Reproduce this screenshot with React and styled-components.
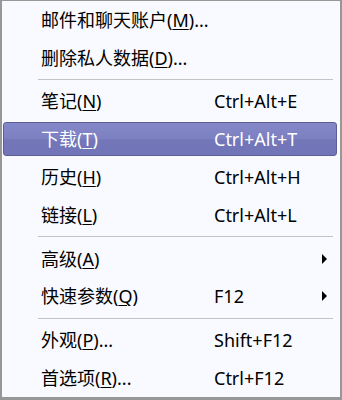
import React from 'react'
import styled, { createGlobalStyle } from 'styled-components'

const Global = createGlobalStyle`
  html, body { margin: 0; padding: 0; background: #f8faff; }
  body { font-family: "Noto Sans", "Noto Sans CJK SC", sans-serif; }
`

const items = [
  { label: '邮件和聊天账户', key: 'M', dots: true },
  { label: '删除私人数据', key: 'D', dots: true },
  'sep',
  { label: '笔记', key: 'N', shortcut: 'Ctrl+Alt+E' },
  { label: '下载', key: 'T', shortcut: 'Ctrl+Alt+T', active: true },
  { label: '历史', key: 'H', shortcut: 'Ctrl+Alt+H' },
  { label: '链接', key: 'L', shortcut: 'Ctrl+Alt+L' },
  'sep',
  { label: '高级', key: 'A', sub: true },
  { label: '快速参数', key: 'Q', shortcut: 'F12', sub: true },
  'sep',
  { label: '外观', key: 'P', shortcut: 'Shift+F12', dots: true },
  { label: '首选项', key: 'R', shortcut: 'Ctrl+F12', dots: true },
]

const Menu = styled.ul`
  margin: 0;
  padding: 0;
  list-style: none;
  width: 342px;
  height: 400px;
  box-sizing: border-box;
  background: #f8faff;
  border-style: solid;
  border-color: #979797;
  border-width: 1px 2px 3px 2px;
  display: flex;
  flex-direction: column;
`

const Item = styled.li`
  height: 37.8px;
  box-sizing: border-box;
  padding: 2px 3px 2px 1px;
  display: flex;
`

const Bar = styled.div`
  flex: 1;
  display: flex;
  align-items: center;
  box-sizing: border-box;
  padding-left: 37px;
  border: 1px solid ${p => (p.$active ? '#5b5e97' : 'transparent')};
  border-radius: 3px;
  background: ${p =>
    p.$active
      ? 'linear-gradient(#8488c8, #7c80c1 50%, #7376b9 52%, #7174b7)'
      : 'transparent'};
  color: ${p => (p.$active ? '#ffffff' : '#000000')};
  font-size: 18px;
  line-height: 1;
`

const Label = styled.span`
  width: 173px;
  flex: none;
  white-space: nowrap;
`

const Key = styled.span`
  text-decoration: underline;
  text-underline-offset: 2px;
`

const Shortcut = styled.span`
  flex: 1;
  white-space: nowrap;
`

const Arrow = styled.span`
  width: 0;
  height: 0;
  margin-right: 9px;
  border-left: 5px solid #000;
  border-top: 5px solid transparent;
  border-bottom: 5px solid transparent;
`

const Sep = styled.li`
  height: 6px;
  display: flex;
  align-items: center;
  &::after {
    content: '';
    flex: 1;
    height: 1px;
    margin: 0 7px 0 36px;
    background: #c3c3c3;
  }
`

export default function App() {
  return (
    <>
      <Global />
      <Menu>
        {items.map((it, i) =>
          it === 'sep' ? (
            <Sep key={i} />
          ) : (
            <Item key={i}>
              <Bar $active={it.active}>
                <Label>
                  {it.label}(<Key>{it.key}</Key>){it.dots ? '...' : ''}
                </Label>
                <Shortcut>{it.shortcut}</Shortcut>
                {it.sub && <Arrow />}
              </Bar>
            </Item>
          )
        )}
      </Menu>
    </>
  )
}
